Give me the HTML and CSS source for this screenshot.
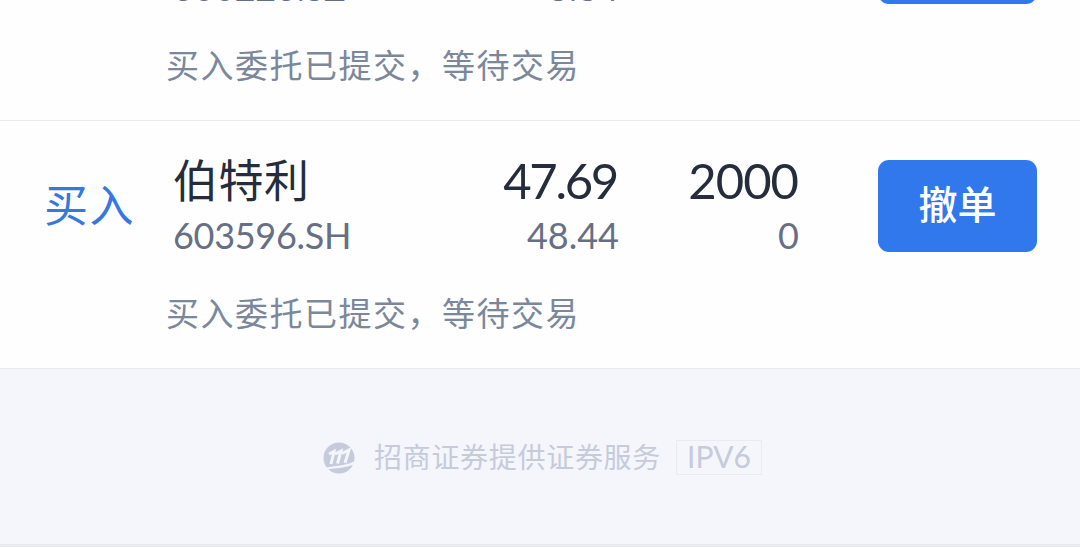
FILE: index.html
```
<!DOCTYPE html>
<html lang="zh-CN">
<head>
    <meta charset="UTF-8">
    <title>委托撤单</title>
    <link rel="stylesheet" href="styles.css">
</head>

<body>

<div class="orders">

    <div class="order">
        <div class="orderInfo">
            <div class="side"></div>
            <div class="stock">
                <div class="name">&nbsp;</div>
                <div class="code">600226.SZ</div>
            </div>
            <div class="price">
                <div class="main">&nbsp;</div>
                <div class="sub">8.84</div>
            </div>
            <div class="amount">
                <div class="main">&nbsp;</div>
                <div class="sub">&nbsp;</div>
            </div>
            <button type="button" class="cancelButton"></button>
        </div>
        <div class="status">买入委托已提交，等待交易</div>
    </div>

    <div class="order">
        <div class="orderInfo">
            <div class="side">买入</div>
            <div class="stock">
                <div class="name">伯特利</div>
                <div class="code">603596.SH</div>
            </div>
            <div class="price">
                <div class="main">47.69</div>
                <div class="sub">48.44</div>
            </div>
            <div class="amount">
                <div class="main">2000</div>
                <div class="sub">0</div>
            </div>
            <button type="button" class="cancelButton">撤单</button>
        </div>
        <div class="status">买入委托已提交，等待交易</div>
    </div>

</div>

<div class="footer">
    <svg class="logo" viewBox="0 0 32 32">
        <circle cx="16" cy="16" r="15.5" fill="#c5cbdb"/>
        <path d="M6 12 L11 9.500 L8 22 M12 12 L18 9 L14.500 21.500 M19 11.500 L26 8 L22 21" fill="none" stroke="#f4f6fb" stroke-width="3"/>
        <path d="M3 25.500 C12 24 22 24 32 19 L32 22 C24 26 12 26 4 27.500 Z" fill="#f4f6fb"/>
    </svg>
    <span class="provider">招商证券提供证券服务</span>
    <span class="tag">IPV6</span>
</div>

</body>
</html>
```
FILE: styles.css
```
* {
    box-sizing: border-box;
}

body {
    margin: 0;
    height: 548px;
    overflow: hidden;
    background-color: #fefefe;
    font-family: "Noto Sans CJK SC", sans-serif;
    display: flex;
    flex-direction: column;
}

/* list is scrolled so only the end of the first order shows */
.orders {
    margin-top: -127px;
}

.order {
    height: 248px;
    padding-top: 26px;
    border-bottom: 1px solid #e9eaec;
}

.orderInfo {
    display: grid;
    grid-template-columns: 129px 240px 206px 180px 238px;
    padding-left: 44px;
    height: 116px;
}

.side {
    padding-top: 26px;
    color: #3478e0;
    font-size: 44px;
    letter-spacing: 1.5px;
    line-height: 60px;
}

.name {
    padding-top: 2px;
    color: #252d3d;
    font-size: 45px;
    letter-spacing: 0.5px;
    line-height: 60px;
}

.code, .sub {
    color: #666f84;
    font-family: Lato, sans-serif;
    font-size: 36px;
    line-height: 50px;
}

.code {
    padding-top: 1px;
    letter-spacing: -0.3px;
}

.main {
    padding-top: 3px;
    color: #252d3d;
    font-family: Lato, sans-serif;
    font-size: 49px;
    line-height: 60px;
}

.price, .amount {
    text-align: right;
}

.price .main {
    padding-right: 2px;
    letter-spacing: -2.3px;
}

.amount .main {
    padding-right: 1px;
    letter-spacing: -1px;
}

.cancelButton {
    margin-top: 13px;
    justify-self: end;
    width: 159px;
    height: 92px;
    padding: 0 0 8px;
    border: none;
    border-radius: 11px;
    background-color: #3078eb;
    color: white;
    font-family: "Noto Sans CJK SC", sans-serif;
    font-size: 39px;
    font-weight: 500;
}

.status {
    margin-top: 24px;
    padding-left: 166px;
    color: #7b879a;
    font-size: 33px;
    letter-spacing: 1.5px;
    line-height: 50px;
}

.footer {
    height: 178px;
    padding: 2px 0 0 5px;
    border-bottom: 3px solid #e9eaef;
    background-color: #f4f6fb;
    color: #c5cbdb;
    display: flex;
    align-items: center;
    justify-content: center;
}

.logo {
    width: 32px;
    height: 32px;
    margin-right: 19px;
}

.provider {
    padding-bottom: 4px;
    font-size: 28px;
    letter-spacing: 0.7px;
    line-height: 40px;
}

.tag {
    width: 86px;
    height: 35px;
    margin-left: 15px;
    border: 1px solid #e9ebf1;
    font-family: Lato, sans-serif;
    font-size: 30px;
    line-height: 31px;
    text-align: center;
}
```
